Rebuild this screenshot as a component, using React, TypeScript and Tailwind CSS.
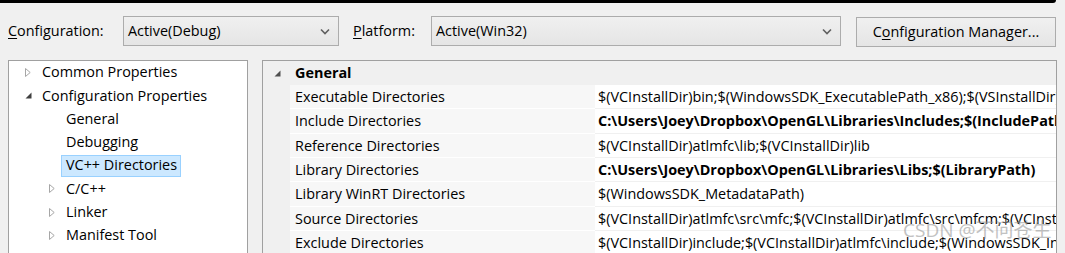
import React from "react";

const Collapsed = () => (
  <svg width="6" height="9" viewBox="0 0 6 9" className="shrink-0">
    <polygon points="0.5,0.5 5.2,4.5 0.5,8.5" fill="none" stroke="#a6a6a6" strokeWidth="1" />
  </svg>
);

const Expanded = ({ color = "#404040" }: { color?: string }) => (
  <svg width="7" height="7" viewBox="0 0 7 7" className="shrink-0">
    <polygon points="6.5,0.5 6.5,6.5 0.5,6.5" fill={color} />
  </svg>
);

const Chevron = () => (
  <svg width="10" height="7" viewBox="0 0 10 7">
    <polyline points="1,1.5 5,5.5 9,1.5" fill="none" stroke="#606060" strokeWidth="1.6" />
  </svg>
);

type TreeItem = { label: string; level: 0 | 1; icon?: "c" | "e"; selected?: boolean };

const tree: TreeItem[] = [
  { label: "Common Properties", level: 0, icon: "c" },
  { label: "Configuration Properties", level: 0, icon: "e" },
  { label: "General", level: 1 },
  { label: "Debugging", level: 1 },
  { label: "VC++ Directories", level: 1, selected: true },
  { label: "C/C++", level: 1, icon: "c" },
  { label: "Linker", level: 1, icon: "c" },
  { label: "Manifest Tool", level: 1, icon: "c" },
  { label: "XML Document Generator", level: 1, icon: "c" },
];

type Row = { name: string; value: string; bold?: boolean };
const rows: Row[] = [
  { name: "Executable Directories", value: "$(VCInstallDir)bin;$(WindowsSDK_ExecutablePath_x86);$(VSInstallDir)Common7\\Tools\\bin;$(VSInstallDir)Common7\\tools" },
  { name: "Include Directories", value: "C:\\Users\\Joey\\Dropbox\\OpenGL\\Libraries\\Includes;$(IncludePath)", bold: true },
  { name: "Reference Directories", value: "$(VCInstallDir)atlmfc\\lib;$(VCInstallDir)lib" },
  { name: "Library Directories", value: "C:\\Users\\Joey\\Dropbox\\OpenGL\\Libraries\\Libs;$(LibraryPath)", bold: true },
  { name: "Library WinRT Directories", value: "$(WindowsSDK_MetadataPath)" },
  { name: "Source Directories", value: "$(VCInstallDir)atlmfc\\src\\mfc;$(VCInstallDir)atlmfc\\src\\mfcm;$(VCInstallDir)atlmfc\\src\\atl" },
  { name: "Exclude Directories", value: "$(VCInstallDir)include;$(VCInstallDir)atlmfc\\include;$(WindowsSDK_IncludePath)" },
];

export default function App() {
  return (
    <div className="w-[1065px] h-[253px] bg-[#f0f0f0] overflow-hidden relative font-['Open_Sans',sans-serif] text-[14.4px] text-black leading-none">
      <div className="h-[3px] bg-black mr-[9px] rounded-br-[4px]" />
      {/* toolbar */}
      <div className="flex items-start h-[57px] pl-[8px] pt-[13px]">
        <div className="w-[115px] h-[30px] flex items-center">
          <span>
            <span className="underline underline-offset-2">C</span>onfiguration:
          </span>
        </div>
        <div className="w-[216px] h-[30px] border border-[#acacac] bg-gradient-to-b from-[#f0f0f0] to-[#e5e5e5] flex items-center pl-[4px] pr-[8px]">
          <span className="flex-1">Active(Debug)</span>
          <Chevron />
        </div>
        <div className="ml-[14px] w-[78px] h-[30px] flex items-center">
          <span>
            <span className="underline underline-offset-2">P</span>latform:
          </span>
        </div>
        <div className="w-[410px] h-[30px] border border-[#acacac] bg-gradient-to-b from-[#f0f0f0] to-[#e5e5e5] flex items-center pl-[4px] pr-[8px]">
          <span className="flex-1">Active(Win32)</span>
          <Chevron />
        </div>
        <div className="ml-[15px] mt-[1px] w-[200px] h-[30px] border border-[#acacac] bg-gradient-to-b from-[#f0f0f0] to-[#e5e5e5] flex items-center justify-center">
          <span>
            C<span className="underline underline-offset-2">o</span>nfiguration Manager...
          </span>
        </div>
      </div>
      {/* panels */}
      <div className="flex pl-[8px] gap-[14px] h-[200px]">
        <div className="w-[240px] h-full bg-white border border-[#a0a0a0] overflow-hidden">
          {tree.map((t, i) => (
            <div
              key={i}
              className={`h-[23.25px] flex items-center ${t.level === 0 ? "pl-[16px]" : "pl-[40px]"}`}
            >
              <div className="w-[17px] flex items-center">
                {t.icon === "c" && <Collapsed />}
                {t.icon === "e" && <Expanded />}
              </div>
              {t.selected ? (
                <span className="-ml-[5px] h-[22px] flex items-center pl-[4px] pr-[3px] bg-[#cce8ff] border border-[#99d1ff] whitespace-nowrap">
                  {t.label}
                </span>
              ) : (
                <span className="whitespace-nowrap">{t.label}</span>
              )}
            </div>
          ))}
        </div>
        <div className="w-[795px] h-full border border-[#a0a0a0] bg-[#f0f0f0] overflow-hidden">
          <div className="h-[24px] flex items-center">
            <div className="w-[27px] flex justify-center pl-[2px]">
              <Expanded color="#505050" />
            </div>
            <span className="pl-[5px] font-bold">General</span>
          </div>
          {rows.map((r, i) => (
            <div key={i} className="h-[24.33px] flex">
              <div className="w-[27px] shrink-0" />
              <div className="w-[305px] shrink-0 bg-[#f7f7f7] border-b border-white flex items-center pl-[5px] pt-[1px] whitespace-nowrap">
                {r.name}
              </div>
              <div
                className={`flex-1 bg-white border-b border-[#f0f0f0] flex items-center pl-[3px] pt-[1px] whitespace-nowrap overflow-hidden ${r.bold ? "font-bold" : ""}`}
              >
                {r.value}
              </div>
            </div>
          ))}
        </div>
      </div>
      <div className="absolute left-[903px] top-[221px] text-[19px] text-[#9a9a9a] opacity-60 whitespace-nowrap font-['Open_Sans','Noto_Sans_CJK_SC',sans-serif]">
        CSDN @不问苍生
      </div>
    </div>
  );
}
